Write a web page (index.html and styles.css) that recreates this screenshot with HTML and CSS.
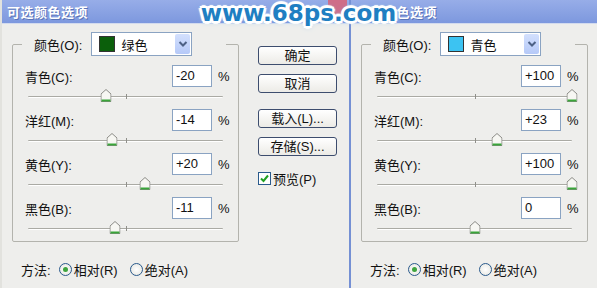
FILE: index.html
```html
<!DOCTYPE html>
<html lang="zh-CN">
<head>
    <meta charset="UTF-8">
    <title>可选颜色选项</title>
    <link rel="stylesheet" href="styles.css">
</head>
<body>
<div class="stage">

    <!-- first dialog: 绿色 -->
    <div class="dialog">
        <div class="titlebar"><span class="title">可选颜色选项</span><span class="close"></span></div>
        <div class="dialog-body">
            <div class="main">
                <fieldset class="group">
                    <legend>
                        <span class="legend-label">颜色(O):</span>
                        <span class="select">
                            <span class="swatch swatch-green"></span>
                            <span class="select-text">绿色</span>
                            <span class="select-arrow"><svg width="10" height="8" viewBox="0 0 10 8"><path d="M1.5 2 L5 5.5 L8.5 2" fill="none" stroke="#4d6185" stroke-width="2"/></svg></span>
                        </span>
                    </legend>
                    <div class="row"><span class="label">青色(C):</span><span class="value">-20</span><span class="pct">%</span></div>
                    <div class="slider"><div class="track"><span class="tick"></span><span class="thumb" style="left: 40%"><svg width="11" height="13" viewBox="0 0 11 13"><path d="M0.5 5 L5.5 0.5 L10.5 5 V12.5 H0.5 Z" fill="#f7f7f3" stroke="#8b8b86"/><path d="M1 11.5 H10" stroke="#3aa53a" stroke-width="2"/></svg></span></div></div>
                    <div class="row"><span class="label">洋红(M):</span><span class="value">-14</span><span class="pct">%</span></div>
                    <div class="slider"><div class="track"><span class="tick"></span><span class="thumb" style="left: 43%"><svg width="11" height="13" viewBox="0 0 11 13"><path d="M0.5 5 L5.5 0.5 L10.5 5 V12.5 H0.5 Z" fill="#f7f7f3" stroke="#8b8b86"/><path d="M1 11.5 H10" stroke="#3aa53a" stroke-width="2"/></svg></span></div></div>
                    <div class="row"><span class="label">黄色(Y):</span><span class="value">+20</span><span class="pct">%</span></div>
                    <div class="slider"><div class="track"><span class="tick"></span><span class="thumb" style="left: 60%"><svg width="11" height="13" viewBox="0 0 11 13"><path d="M0.5 5 L5.5 0.5 L10.5 5 V12.5 H0.5 Z" fill="#f7f7f3" stroke="#8b8b86"/><path d="M1 11.5 H10" stroke="#3aa53a" stroke-width="2"/></svg></span></div></div>
                    <div class="row"><span class="label">黑色(B):</span><span class="value">-11</span><span class="pct">%</span></div>
                    <div class="slider"><div class="track"><span class="tick"></span><span class="thumb" style="left: 44.5%"><svg width="11" height="13" viewBox="0 0 11 13"><path d="M0.5 5 L5.5 0.5 L10.5 5 V12.5 H0.5 Z" fill="#f7f7f3" stroke="#8b8b86"/><path d="M1 11.5 H10" stroke="#3aa53a" stroke-width="2"/></svg></span></div></div>
                </fieldset>
                <div class="method">
                    <span class="method-label">方法:</span>
                    <span class="radio radio-on"></span><span class="radio-text">相对(R)</span>
                    <span class="radio"></span><span class="radio-text">绝对(A)</span>
                </div>
            </div>
            <div class="buttons">
                <div class="btn">确定</div>
                <div class="btn">取消</div>
                <div class="btn btn-gap">载入(L)...</div>
                <div class="btn">存储(S)...</div>
                <div class="preview">
                    <span class="check"><svg width="11" height="11" viewBox="0 0 11 11"><path d="M2 5.5 L4.5 8 L9 2.5" fill="none" stroke="#21a121" stroke-width="2"/></svg></span>
                    <span>预览(P)</span>
                </div>
            </div>
        </div>
    </div>

    <!-- second dialog: 青色 (its button column lies outside the window) -->
    <div class="dialog dialog-second">
        <div class="titlebar"><span class="title">可选颜色选项</span></div>
        <div class="dialog-body">
            <div class="main">
                <fieldset class="group">
                    <legend>
                        <span class="legend-label">颜色(O):</span>
                        <span class="select">
                            <span class="swatch swatch-cyan"></span>
                            <span class="select-text">青色</span>
                            <span class="select-arrow"><svg width="10" height="8" viewBox="0 0 10 8"><path d="M1.5 2 L5 5.5 L8.5 2" fill="none" stroke="#4d6185" stroke-width="2"/></svg></span>
                        </span>
                    </legend>
                    <div class="row"><span class="label">青色(C):</span><span class="value">+100</span><span class="pct">%</span></div>
                    <div class="slider"><div class="track"><span class="tick"></span><span class="thumb" style="left: 100%"><svg width="11" height="13" viewBox="0 0 11 13"><path d="M0.5 5 L5.5 0.5 L10.5 5 V12.5 H0.5 Z" fill="#f7f7f3" stroke="#8b8b86"/><path d="M1 11.5 H10" stroke="#3aa53a" stroke-width="2"/></svg></span></div></div>
                    <div class="row"><span class="label">洋红(M):</span><span class="value">+23</span><span class="pct">%</span></div>
                    <div class="slider"><div class="track"><span class="tick"></span><span class="thumb" style="left: 61.5%"><svg width="11" height="13" viewBox="0 0 11 13"><path d="M0.5 5 L5.5 0.5 L10.5 5 V12.5 H0.5 Z" fill="#f7f7f3" stroke="#8b8b86"/><path d="M1 11.5 H10" stroke="#3aa53a" stroke-width="2"/></svg></span></div></div>
                    <div class="row"><span class="label">黄色(Y):</span><span class="value">+100</span><span class="pct">%</span></div>
                    <div class="slider"><div class="track"><span class="tick"></span><span class="thumb" style="left: 100%"><svg width="11" height="13" viewBox="0 0 11 13"><path d="M0.5 5 L5.5 0.5 L10.5 5 V12.5 H0.5 Z" fill="#f7f7f3" stroke="#8b8b86"/><path d="M1 11.5 H10" stroke="#3aa53a" stroke-width="2"/></svg></span></div></div>
                    <div class="row"><span class="label">黑色(B):</span><span class="value">0</span><span class="pct">%</span></div>
                    <div class="slider"><div class="track"><span class="tick"></span><span class="thumb" style="left: 50%"><svg width="11" height="13" viewBox="0 0 11 13"><path d="M0.5 5 L5.5 0.5 L10.5 5 V12.5 H0.5 Z" fill="#f7f7f3" stroke="#8b8b86"/><path d="M1 11.5 H10" stroke="#3aa53a" stroke-width="2"/></svg></span></div></div>
                </fieldset>
                <div class="method">
                    <span class="method-label">方法:</span>
                    <span class="radio radio-on"></span><span class="radio-text">相对(R)</span>
                    <span class="radio"></span><span class="radio-text">绝对(A)</span>
                </div>
            </div>
        </div>
    </div>

    <div class="watermark">www.68ps.com</div>
</div>
</body>
</html>
```

FILE: styles.css
```css
body {
    margin: 0;
    padding: 0;
    background-color: #eeeeec;
    font-family: 'Liberation Sans', 'Noto Sans CJK SC', sans-serif;
    font-size: 13px;
    color: #111;
}

.stage {
    position: relative;
    display: flex;
    width: 597px;
    height: 288px;
    overflow: hidden;
}

.dialog {
    flex: 0 0 349px;
    box-sizing: border-box;
    height: 288px;
    border-left: 2px solid #e2e2de;
    background-color: #eeeeec;
}

.dialog-second {
    border-left-color: #7590d4;
}

.titlebar {
    display: flex;
    align-items: center;
    justify-content: space-between;
    height: 23px;
    padding: 0 0 0 5px;
    border-bottom: 1px solid #d3dbee;
    background: linear-gradient(#97ade8, #7d98de);
}

.title {
    color: #fff;
    font-weight: bold;
    font-size: 13px;
    letter-spacing: 0.5px;
    text-shadow: 1px 1px 0 #5a74b8;
}

.close {
    align-self: flex-start;
    width: 19px;
    height: 14px;
    margin: 0 2px 0 0;
    border-radius: 0 0 3px 3px;
    background: #cf6d88;
}

.dialog-body {
    display: flex;
}

.main {
    width: 237px;
    padding-top: 8px;
}

/* group box with the colour dropdown as legend */
.group {
    box-sizing: border-box;
    width: 227px;
    margin: 0 0 0 10px;
    padding: 9px 5px 0 12px;
    border: 1px solid #b3b3ad;
    border-radius: 2px;
}

.group legend {
    display: flex;
    align-items: center;
    margin-left: -3px;
    padding: 0 34px 0 12px;
}

.legend-label {
    margin-right: 9px;
}

.select {
    display: flex;
    align-items: center;
    box-sizing: border-box;
    width: 101px;
    height: 24px;
    padding: 0 1px 0 7px;
    border: 1px solid #8aa3c2;
    background-color: #fff;
}

.swatch {
    width: 14px;
    height: 14px;
    border: 1px solid #333;
}

.swatch-green {
    background-color: #0b5f0b;
}

.swatch-cyan {
    background-color: #3cc3f2;
}

.select-text {
    flex: 1;
    margin-left: 6px;
}

.select-arrow {
    display: flex;
    align-items: center;
    justify-content: center;
    width: 15px;
    height: 20px;
    border-radius: 2px;
    background: linear-gradient(#d3e0fd, #b5c9f8);
}

.row {
    display: flex;
    align-items: center;
    height: 22px;
}

.label {
    flex: 1;
}

.value {
    box-sizing: border-box;
    width: 40px;
    height: 22px;
    padding-left: 3px;
    border: 1px solid #8aa3c2;
    background-color: #fff;
    line-height: 20px;
}

.pct {
    width: 15px;
    margin-left: 6px;
}

.slider {
    height: 22px;
    padding-top: 9px;
    box-sizing: border-box;
}

.track {
    position: relative;
    height: 1px;
    margin: 0 10px 0 3px;
    border-bottom: 1px solid #fff;
    background-color: #aaaaa4;
    border-radius: 1px;
}

.tick {
    position: absolute;
    left: 50%;
    top: -2px;
    width: 1px;
    height: 5px;
    background-color: #8f8f8a;
}

.thumb {
    position: absolute;
    top: -7px;
    width: 11px;
    height: 13px;
    transform: translateX(-50%);
}

.thumb svg {
    display: block;
}

.method {
    display: flex;
    align-items: center;
    height: 16px;
    margin: 19px 0 0 19px;
}

.method-label {
    margin-right: 8px;
}

.radio {
    box-sizing: border-box;
    width: 13px;
    height: 13px;
    margin-right: 2px;
    border: 1px solid #2a5a8c;
    border-radius: 50%;
    background: radial-gradient(#fff, #e4e4de);
    display: flex;
    align-items: center;
    justify-content: center;
}

.radio-on::after {
    content: "";
    width: 5px;
    height: 5px;
    border-radius: 50%;
    background-color: #3ea43e;
}

.radio-text {
    margin-right: 12px;
}

.buttons {
    width: 79px;
    margin-left: 19px;
    padding-top: 22px;
}

.btn {
    box-sizing: border-box;
    height: 19px;
    margin-bottom: 9px;
    border: 1px solid #3d4d6e;
    border-radius: 3px;
    background: linear-gradient(#ffffff, #ecebe6);
    text-align: center;
    line-height: 17px;
}

.btn-gap {
    margin-top: 16px;
}

.preview {
    display: flex;
    align-items: center;
    margin-top: 14px;
    height: 16px;
}

.check {
    box-sizing: border-box;
    width: 13px;
    height: 13px;
    margin-right: 2px;
    border: 1px solid #2a5a8c;
    background-color: #fff;
    display: flex;
    align-items: center;
    justify-content: center;
}

.check svg {
    display: block;
}

.watermark {
    position: absolute;
    top: 0;
    left: 0;
    width: 597px;
    text-align: center;
    font-family: 'DejaVu Sans', sans-serif;
    font-weight: bold;
    font-size: 23px;
    line-height: 27px;
    color: #1f7fc2;
    text-shadow:
        2px 0 0 #fff, -2px 0 0 #fff, 0 2px 0 #fff, 0 -2px 0 #fff,
        2px 2px 0 #fff, -2px -2px 0 #fff, 2px -2px 0 #fff, -2px 2px 0 #fff,
        3px 0 1px #fff, -3px 0 1px #fff, 0 3px 1px #fff, 0 -3px 1px #fff,
        0 0 6px #6fb3e4;
}
```
